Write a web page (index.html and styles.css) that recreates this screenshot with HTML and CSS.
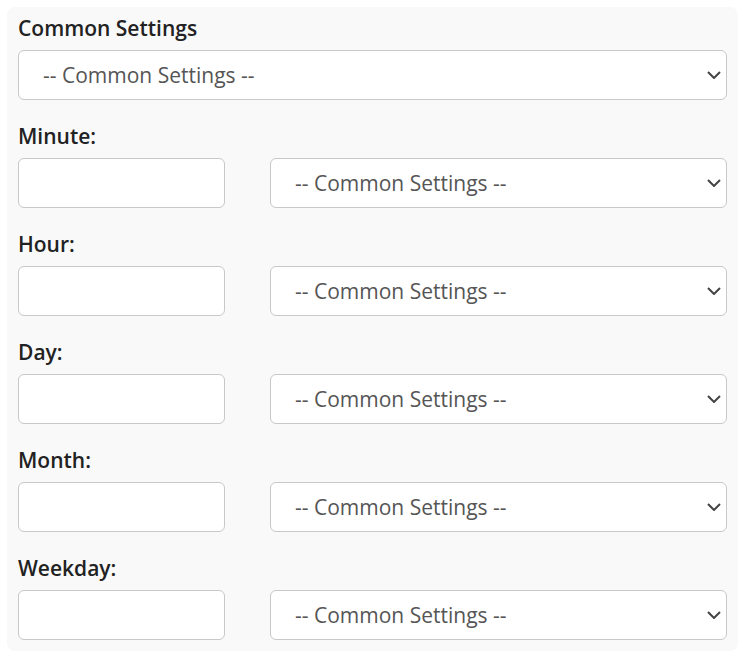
FILE: index.html
```html
<!DOCTYPE html>
<html lang="en">
  <head>
    <meta charset="UTF-8" />
    <meta name="viewport" content="width=device-width, initial-scale=1.0" />
    <link rel="stylesheet" href="styles.css">
    <title>Cron Settings</title>
  </head>
  <body>
    <div class="cron-panel">
      <div class="field">
        <label for="common">Common Settings</label>
        <select id="common" class="select">
          <option>-- Common Settings --</option>
        </select>
      </div>
      <div class="field">
        <label for="minute">Minute:</label>
        <div class="field-row">
          <input id="minute" class="text-input" type="text" />
          <select class="select">
            <option>-- Common Settings --</option>
          </select>
        </div>
      </div>
      <div class="field">
        <label for="hour">Hour:</label>
        <div class="field-row">
          <input id="hour" class="text-input" type="text" />
          <select class="select">
            <option>-- Common Settings --</option>
          </select>
        </div>
      </div>
      <div class="field">
        <label for="day">Day:</label>
        <div class="field-row">
          <input id="day" class="text-input" type="text" />
          <select class="select">
            <option>-- Common Settings --</option>
          </select>
        </div>
      </div>
      <div class="field">
        <label for="month">Month:</label>
        <div class="field-row">
          <input id="month" class="text-input" type="text" />
          <select class="select">
            <option>-- Common Settings --</option>
          </select>
        </div>
      </div>
      <div class="field">
        <label for="weekday">Weekday:</label>
        <div class="field-row">
          <input id="weekday" class="text-input" type="text" />
          <select class="select">
            <option>-- Common Settings --</option>
          </select>
        </div>
      </div>
    </div>
  </body>
</html>
```

FILE: styles.css
```css
* {
  margin: 0;
  padding: 0;
  box-sizing: border-box;
  font-family: "Open Sans", "Liberation Sans", sans-serif;
}
body {
  background: #fff;
}
.cron-panel {
  margin: 7px;
  width: 731px;
  padding: 6px 11px 11px;
  background-color: #f9f9f9;
  border-radius: 8px;
}
.field {
  margin-bottom: 21px;
}
.field:last-child {
  margin-bottom: 0;
}
label {
  display: block;
  font-size: 21px;
  line-height: 30px;
  font-weight: 600;
  color: #222;
  margin-bottom: 7px;
}
.field-row {
  display: grid;
  grid-template-columns: 207px 1fr;
  gap: 45px;
}
.text-input,
.select {
  display: block;
  width: 100%;
  height: 50px;
  border: 1px solid #c8c8c8;
  border-radius: 6px;
  background-color: #fff;
  font-size: 21px;
  color: #555;
}
.text-input {
  padding: 0 12px;
}
.select {
  appearance: none;
  padding: 0 30px 0 24px;
  background-image: url("data:image/svg+xml,%3Csvg xmlns='http://www.w3.org/2000/svg' viewBox='0 0 14 8'%3E%3Cpath d='M1 1l6 6 6-6' fill='none' stroke='%23444' stroke-width='2'/%3E%3C/svg%3E");
  background-repeat: no-repeat;
  background-position: right 5px center;
  background-size: 14px 8px;
}
```
